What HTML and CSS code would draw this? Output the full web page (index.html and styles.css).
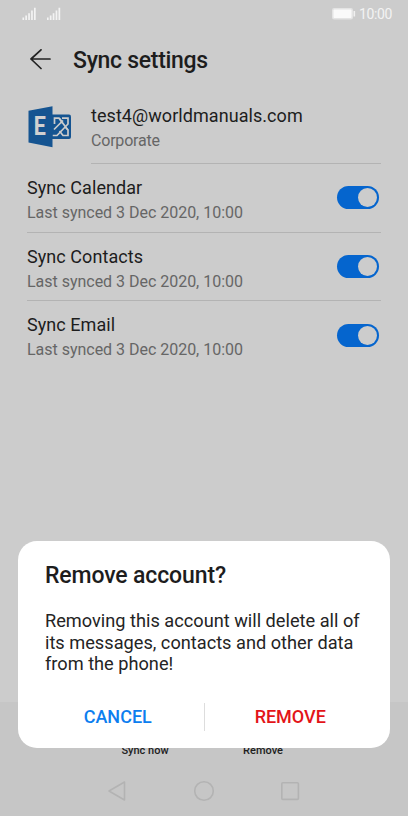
FILE: index.html
```html
<!DOCTYPE html>
<html lang="en">
<head>
<meta charset="utf-8">
<title>Sync settings</title>
<link rel="stylesheet" href="styles.css">
</head>
<body>
<div class="screen">
  <header class="status">
    <svg class="signals" width="42" height="14" viewBox="0 0 42 14" fill="#f3f3f3">
      <path id="bars" d="M.5 10.500h1.600V13H.5zM3.300 8.500h1.700V13H3.300zM6.200 6.200h1.700V13H6.200zM9.100 3.500h1.700V13H9.100zM12 .8h1.700V13H12z"/>
      <use href="#bars" x="24.500"/>
    </svg>
    <svg class="battery" width="24" height="12" viewBox="0 0 24 12">
      <rect x=".75" y=".75" width="19.500" height="10" rx="1.500" fill="#fafafa" stroke="#e4e4e4" stroke-width="1.500"/>
      <path d="M22.300 3v5.500" stroke="#f0f0f0" stroke-width="1.600"/>
    </svg>
    <span class="clock">10:00</span>
  </header>
  <div class="titlebar">
    <svg width="22" height="22" viewBox="0 0 22 22" fill="none" stroke="#222" stroke-width="1.700" stroke-linecap="round" stroke-linejoin="round"><path d="M21 10H2M12 .8L2 10L12 19.500"/></svg>
    <h1>Sync settings</h1>
  </div>
  <main>
    <section class="account">
      <svg width="44" height="42" viewBox="0 0 44 42">
        <rect x="22" y="8.500" width="21" height="24.500" rx="2" fill="#155491"/>
        <g fill="none" stroke="#cccccc" stroke-width="1.700">
          <path d="M26.500 18v-5.800H31L40 24v5.500h-5L31.500 25"/>
          <path d="M34.500 17l-3-4.500M34 12.200h6V18L29 29.500h-4.500M26 23.500l9-9M36.500 20.500l3.500 3.500"/>
        </g>
        <path d="M.5 4.800L24.500.3v41L.5 36.500z" fill="#155491"/>
        <text class="logo-letter" transform="translate(5.800 29) scale(.86 1)">E</text>
      </svg>
      <div class="identity">
        <div class="primary email">test4@worldmanuals.com</div>
        <div class="secondary kind">Corporate</div>
      </div>
    </section>
    <section class="row">
      <div><div class="primary">Sync Calendar</div><div class="secondary">Last synced 3 Dec 2020, 10:00</div></div>
      <span class="toggle"></span>
    </section>
    <section class="row">
      <div><div class="primary">Sync Contacts</div><div class="secondary">Last synced 3 Dec 2020, 10:00</div></div>
      <span class="toggle"></span>
    </section>
    <section class="row">
      <div><div class="primary">Sync Email</div><div class="secondary">Last synced 3 Dec 2020, 10:00</div></div>
      <span class="toggle"></span>
    </section>
  </main>
  <footer>
    <div class="actions"><span>Sync now</span><span>Remove</span></div>
    <svg class="nav" width="194" height="22" viewBox="0 0 194 22" fill="none" stroke="#b3b3b3" stroke-width="1.600" stroke-linejoin="round">
      <path d="M17.500 2v18L2 11z"/><circle cx="97" cy="11" r="9.300"/><rect x="174.800" y="2.800" width="16.600" height="16.600" rx="1"/>
    </svg>
  </footer>
  <div class="dialog" role="dialog">
    <h2>Remove account?</h2>
    <p>Removing this account will delete all of<br>its messages, contacts and other data<br>from the phone!</p>
    <div class="buttons"><span class="cancel">CANCEL</span><span class="remove">REMOVE</span></div>
  </div>
</div>
</body>
</html>
```
FILE: styles.css
```css
* { box-sizing: border-box; }
body { margin: 0; font-family: Roboto, "Liberation Sans", sans-serif; color: #1d1d1d; }
h1, h2, p { margin: 0; font-weight: 500; }
svg { display: block; flex: none; }
.screen { position: relative; width: 408px; height: 816px; background: #ccc; display: flex; flex-direction: column; overflow: hidden; }
.status { height: 28px; display: flex; align-items: center; padding: 0 16px 0 22px; }
.battery { margin-left: auto; }
.clock { font-size: 14px; line-height: 28px; color: #f3f3f3; margin-left: 3px; width: 33px; letter-spacing: -.35px; }
.titlebar { height: 64px; display: flex; align-items: center; padding-left: 29px; gap: 22px; }
h1 { font-size: 23px; line-height: 30px; padding-top: 2px; letter-spacing: -.3px; }
main { padding: 0 27px; flex: 1; }
.account { display: flex; height: 72px; padding: 14px 0 0 1px; gap: 19px; }
.identity { flex: 1; border-bottom: 1px solid #b3b3b3; }
.primary { font-size: 18px; line-height: 25px; white-space: nowrap; letter-spacing: .06px; }
.secondary { font-size: 16px; line-height: 25px; color: #666; white-space: nowrap; letter-spacing: -.02px; }
.email { margin-top: -3px; }
.kind { letter-spacing: -.2px; }
.row { height: 68.700px; display: flex; align-items: center; justify-content: space-between; padding-right: 2px; border-bottom: 1px solid #b3b3b3; }
.row > div { padding-top: 4px; }
.row:last-child { border-bottom: 0; padding-bottom: 1px; }
.toggle { width: 42px; height: 23px; border-radius: 12px; background: #0565ce; display: flex; align-items: center; justify-content: flex-end; padding-right: 2px; }
.toggle::after { content: ""; width: 19px; height: 19px; border-radius: 50%; background: #ccc; }
footer { height: 114px; background: #c6c6c6; }
.actions { height: 57px; display: flex; align-items: flex-end; font-size: 11px; font-weight: 500; line-height: 16px; }
.actions span { width: 118px; text-align: center; }
.actions span:first-child { margin-left: 86px; }
.nav { margin: 21px auto 0; }
.dialog { position: absolute; left: 18px; top: 541px; width: 372px; height: 207px; border-radius: 19px; background: #fff; padding: 20px 27px; }
h2 { font-size: 23px; line-height: 30px; letter-spacing: -.13px; }
p { font-size: 18.200px; line-height: 21.500px; font-weight: 400; margin-top: 19px; color: #242424; white-space: nowrap; }
.buttons { display: flex; margin: 28px -13px 0; height: 28px; }
.buttons span { flex: 1; text-align: center; font-size: 18px; line-height: 28px; font-weight: 500; }
.buttons .cancel { color: #0d7eef; border-right: 1px solid #ddd; }
.remove { color: #e31418; }
.logo-letter { font: 700 25px Roboto, sans-serif; fill: #d0d0d0; }
```
